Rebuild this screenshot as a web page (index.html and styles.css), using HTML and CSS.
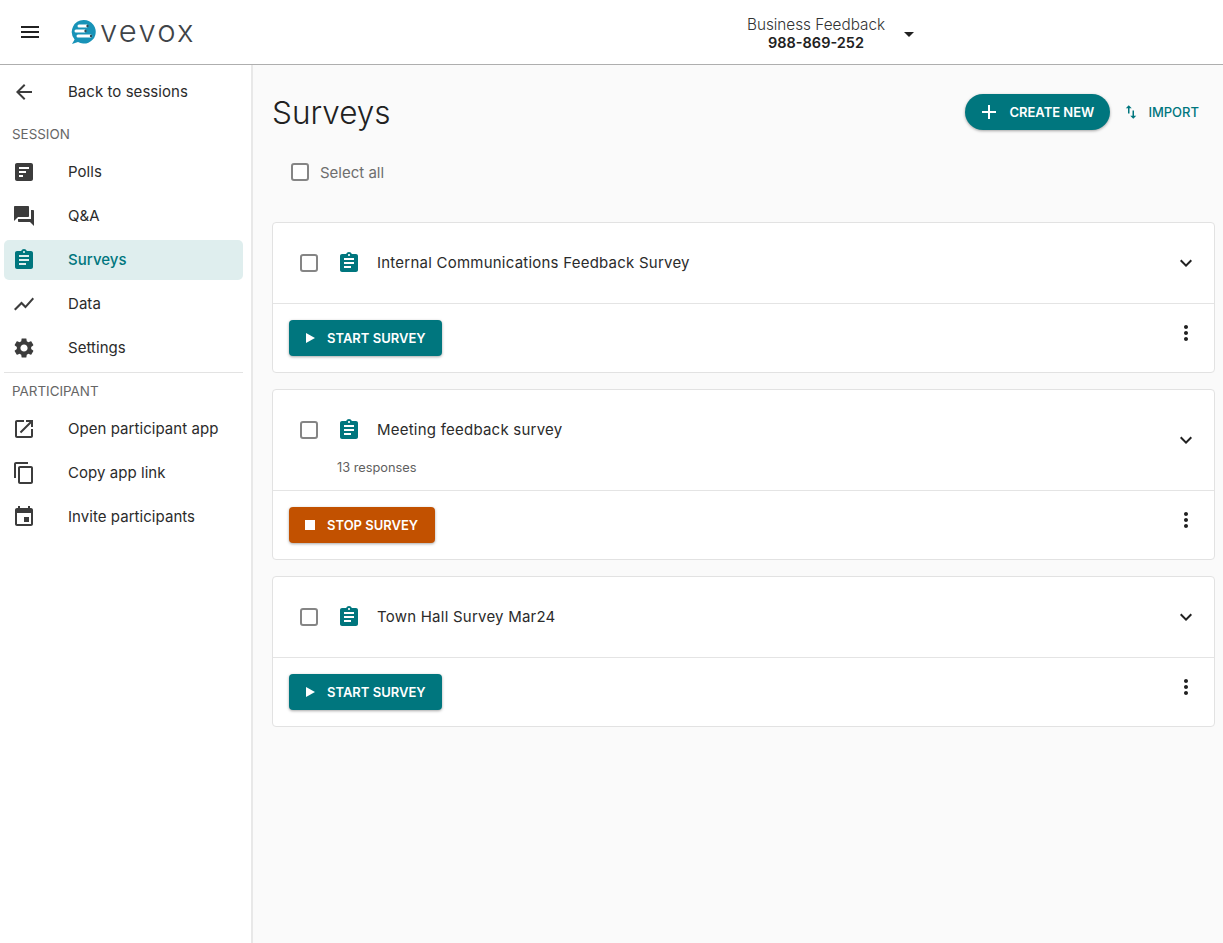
FILE: index.html
```html
<!DOCTYPE html>
<html lang="en">
<head>
<meta charset="utf-8">
<title>Surveys</title>
<link rel="stylesheet" href="styles.css">
</head>
<body>
<svg class="defs" width="0" height="0" aria-hidden="true">
  <symbol id="clip" viewBox="0 0 24 24"><path d="M19 3h-4.180C14.400 1.840 13.300 1 12 1s-2.400.84-2.820 2H5c-1.100 0-2 .9-2 2v14c0 1.100.9 2 2 2h14c1.100 0 2-.9 2-2V5c0-1.100-.9-2-2-2zm-7 0c.55 0 1 .45 1 1s-.45 1-1 1-1-.45-1-1 .45-1 1-1zm2 14H7v-2h7v2zm3-4H7v-2h10v2zm0-4H7V7h10v2z"/></symbol>
</svg>
<header class="topbar">
  <div class="brand">
    <svg class="menu-icon" viewBox="0 0 24 24"><path d="M3 18h18v-2H3v2zm0-5h18v-2H3v2zm0-7v2h18V6H3z"/></svg>
    <svg class="logo-mark" viewBox="0 0 26 26">
      <path fill="#1893b8" d="M13 1a11.800 11.800 0 1 1-6 22L1 25l2.600-4.600A11.800 11.800 0 0 1 13 1z"/>
      <path fill="#fff" d="M8 5.500h8l1.500 1.500L16 8.500H8a1.500 1.500 0 0 1 0-3zM5 10.500h9l1.500 1.500-1.500 1.500H5a1.500 1.500 0 0 1 0-3zM7 15.500h13l1.500 1.500-1.500 1.500H7a1.500 1.500 0 0 1 0-3z"/>
      <circle fill="#2b4a55" cx="16.500" cy="7" r="1.200"/><circle fill="#2b4a55" cx="14.500" cy="12" r="1.200"/><circle fill="#2b4a55" cx="20" cy="17" r="1.200"/>
    </svg>
    <span class="logo-word">vevox</span>
  </div>
  <div class="session-pick">
    <div class="session-text"><span class="session-name">Business Feedback</span><strong class="session-id">988-869-252</strong></div>
    <span class="caret"></span>
  </div>
</header>
<div class="layout">
  <nav class="sidebar">
    <a class="nav-item"><svg class="nav-icon" viewBox="0 0 24 24"><path d="M20 11H7.830l5.590-5.590L12 4l-8 8 8 8 1.410-1.410L7.830 13H20v-2z"/></svg><span>Back to sessions</span></a>
    <div class="nav-heading first">SESSION</div>
    <a class="nav-item"><svg class="nav-icon" viewBox="0 0 24 24"><path fill-rule="evenodd" d="M19 3H5c-1.100 0-2 .9-2 2v14c0 1.100.9 2 2 2h14c1.100 0 2-.9 2-2V5c0-1.100-.9-2-2-2zM7 7h10v2H7zm0 4h7v2H7zm0 4h4v2H7z"/></svg><span>Polls</span></a>
    <a class="nav-item"><svg class="nav-icon" viewBox="0 0 24 24"><path d="M21 6h-2v9H6v2c0 .55.45 1 1 1h11l4 4V7c0-.55-.45-1-1-1zm-4 6V3c0-.55-.45-1-1-1H3c-.55 0-1 .45-1 1v14l4-4h10c.55 0 1-.45 1-1z"/></svg><span>Q&amp;A</span></a>
    <a class="nav-item active"><svg class="nav-icon"><use href="#clip"/></svg><span>Surveys</span></a>
    <a class="nav-item"><svg class="nav-icon" viewBox="0 0 24 24"><path d="M3.500 18.490l6-6.010 4 4L22 6.920l-1.410-1.410-7.090 7.970-4-4L2 16.990z"/></svg><span>Data</span></a>
    <a class="nav-item"><svg class="nav-icon" viewBox="0 0 24 24"><path d="M19.140 12.940c.04-.3.060-.61.060-.94 0-.32-.02-.64-.07-.94l2.030-1.580c.18-.14.230-.41.120-.61l-1.920-3.320c-.12-.22-.37-.29-.59-.22l-2.390.96c-.5-.38-1.030-.7-1.620-.94l-.36-2.540c-.04-.24-.24-.41-.48-.41h-3.840c-.24 0-.43.170-.47.410l-.36 2.540c-.59.240-1.130.570-1.620.94l-2.390-.96c-.22-.08-.47 0-.59.220L2.740 8.870c-.12.210-.08.470.12.610l2.030 1.580c-.05.300-.09.630-.09.940s.02.640.07.940l-2.030 1.580c-.18.140-.23.410-.12.610l1.920 3.320c.12.220.37.290.59.220l2.390-.96c.5.380 1.030.7 1.620.94l.36 2.540c.05.240.24.410.48.410h3.840c.24 0 .44-.17.470-.41l.36-2.540c.59-.24 1.130-.56 1.620-.94l2.390.96c.22.080.47 0 .59-.22l1.920-3.320c.12-.22.070-.47-.12-.61l-2.010-1.580zM12 15.600c-1.980 0-3.600-1.620-3.600-3.600s1.620-3.600 3.600-3.600 3.600 1.620 3.600 3.600-1.620 3.600-3.600 3.600z"/></svg><span>Settings</span></a>
    <div class="nav-divider"></div>
    <div class="nav-heading">PARTICIPANT</div>
    <a class="nav-item"><svg class="nav-icon" viewBox="0 0 24 24"><path d="M19 19H5V5h7V3H5c-1.110 0-2 .9-2 2v14c0 1.100.89 2 2 2h14c1.100 0 2-.9 2-2v-7h-2v7zM14 3v2h3.590l-9.830 9.830 1.410 1.410L19 6.410V10h2V3h-7z"/></svg><span>Open participant app</span></a>
    <a class="nav-item"><svg class="nav-icon" viewBox="0 0 24 24"><path d="M16 1H4c-1.100 0-2 .9-2 2v14h2V3h12V1zm3 4H8c-1.100 0-2 .9-2 2v14c0 1.100.9 2 2 2h11c1.100 0 2-.9 2-2V7c0-1.100-.9-2-2-2zm0 16H8V7h11v14z"/></svg><span>Copy app link</span></a>
    <a class="nav-item"><svg class="nav-icon" viewBox="0 0 24 24"><path d="M19 3h-1V1h-2v2H8V1H6v2H5c-1.110 0-2 .9-2 2v14c0 1.100.89 2 2 2h14c1.100 0 2-.9 2-2V5c0-1.100-.9-2-2-2zm0 16H5V8h14v11zm-7-7h5v5h-5z"/></svg><span>Invite participants</span></a>
  </nav>
  <main class="content">
    <div class="title-row">
      <h1>Surveys</h1>
      <div class="title-actions">
        <button class="create-btn"><svg viewBox="0 0 24 24"><path d="M19 13h-6v6h-2v-6H5v-2h6V5h2v6h6v2z"/></svg>CREATE NEW</button>
        <button class="import-btn"><svg viewBox="0 0 24 24"><path d="M16 17.010V10h-2v7.010h-3L15 21l4-3.990h-3zM9 3L5 6.990h3V14h2V6.990h3L9 3z"/></svg>IMPORT</button>
      </div>
    </div>
    <label class="select-all"><span class="check"></span><span>Select all</span></label>
    <section class="card">
      <div class="card-head">
        <div class="card-title"><span class="check"></span><svg class="survey-icon"><use href="#clip"/></svg><span class="card-name">Internal Communications Feedback Survey</span></div>
        <svg class="chev" viewBox="0 0 24 24"><path d="M7.410 8.590L12 13.170l4.590-4.580L18 10l-6 6-6-6z"/></svg>
      </div>
      <div class="card-foot">
        <button class="action start"><span class="tri"></span>START SURVEY</button>
        <svg class="more" viewBox="0 0 24 24"><path d="M12 8c1.100 0 2-.9 2-2s-.9-2-2-2-2 .9-2 2 .9 2 2 2zm0 2c-1.100 0-2 .9-2 2s.9 2 2 2 2-.9 2-2-.9-2-2-2zm0 6c-1.100 0-2 .9-2 2s.9 2 2 2 2-.9 2-2-.9-2-2-2z"/></svg>
      </div>
    </section>
    <section class="card">
      <div class="card-head tall">
        <div class="card-main">
          <div class="card-title"><span class="check"></span><svg class="survey-icon"><use href="#clip"/></svg><span class="card-name">Meeting feedback survey</span></div>
          <div class="responses">13 responses</div>
        </div>
        <svg class="chev" viewBox="0 0 24 24"><path d="M7.410 8.590L12 13.170l4.590-4.580L18 10l-6 6-6-6z"/></svg>
      </div>
      <div class="card-foot">
        <button class="action stop"><span class="sq"></span>STOP SURVEY</button>
        <svg class="more" viewBox="0 0 24 24"><path d="M12 8c1.100 0 2-.9 2-2s-.9-2-2-2-2 .9-2 2 .9 2 2 2zm0 2c-1.100 0-2 .9-2 2s.9 2 2 2 2-.9 2-2-.9-2-2-2zm0 6c-1.100 0-2 .9-2 2s.9 2 2 2 2-.9 2-2-.9-2-2-2z"/></svg>
      </div>
    </section>
    <section class="card">
      <div class="card-head">
        <div class="card-title"><span class="check"></span><svg class="survey-icon"><use href="#clip"/></svg><span class="card-name">Town Hall Survey Mar24</span></div>
        <svg class="chev" viewBox="0 0 24 24"><path d="M7.410 8.590L12 13.170l4.590-4.580L18 10l-6 6-6-6z"/></svg>
      </div>
      <div class="card-foot">
        <button class="action start"><span class="tri"></span>START SURVEY</button>
        <svg class="more" viewBox="0 0 24 24"><path d="M12 8c1.100 0 2-.9 2-2s-.9-2-2-2-2 .9-2 2 .9 2 2 2zm0 2c-1.100 0-2 .9-2 2s.9 2 2 2 2-.9 2-2-.9-2-2-2zm0 6c-1.100 0-2 .9-2 2s.9 2 2 2 2-.9 2-2-.9-2-2-2z"/></svg>
      </div>
    </section>
  </main>
</div>
</body>
</html>
```
FILE: styles.css
```css
* { box-sizing: border-box; }
html, body { margin: 0; height: 100%; }
body {
  font-family: "Inter", "Liberation Sans", sans-serif;
  color: #212121;
  background: #fff;
  height: 943px;
  overflow: hidden;
  display: flex;
  flex-direction: column;
}
.defs { position: absolute; }
.topbar {
  height: 65px;
  flex: none;
  display: flex;
  align-items: center;
  border-bottom: 1px solid #aeaeae;
}
.brand { display: flex; align-items: center; padding-left: 18px; width: 747px; }
.menu-icon { width: 24px; height: 24px; fill: #212121; }
.logo-mark { width: 26px; height: 26px; margin-left: 29px; }
.logo-word {
  font-family: "Inter", sans-serif;
  font-weight: 300;
  font-size: 31px;
  letter-spacing: 2.2px;
  line-height: 30px;
  color: #3f4448;
  margin-left: 3px;
  margin-top: -2px;
}
.session-pick { display: flex; align-items: center; margin-top: 4px; }
.session-text { display: flex; flex-direction: column; align-items: center; line-height: 18px; width: 138px; }
.session-name { font-size: 15.300px; font-weight: 300; color: #333; white-space: nowrap; }
.session-id { font-size: 14.500px; font-weight: 600; color: #212121; white-space: nowrap; }
.caret { width: 0; height: 0; border: 5px solid transparent; border-top-color: #212121; border-bottom: 0; margin-left: 19px; }
.layout { flex: 1; display: flex; min-height: 0; }
.sidebar {
  width: 253px;
  flex: none;
  border-right: 2px solid #e8e8e8;
  padding: 7px 8px 0 4px;
  background: #fff;
}
.nav-item {
  display: flex;
  align-items: center;
  height: 40px;
  margin-bottom: 4px;
  border-radius: 5px;
  font-size: 15px;
  color: #2b2b2b;
  padding-left: 8px;
  letter-spacing: .05px;
}
.nav-item span { margin-left: 32px; padding-bottom: 1px; white-space: nowrap; }
.nav-icon { width: 24px; height: 24px; fill: #3c3c3c; flex: none; }
.nav-item.active { background: #dfeeee; color: #00767e; font-weight: 500; }
.nav-item.active .nav-icon { fill: #00767e; }
.nav-heading { font-size: 13.400px; color: #666; padding-left: 8px; height: 18px; line-height: 18px; margin-top: 9px; margin-bottom: 9px; }
.nav-heading.first { margin-top: 13px; }
.nav-divider { height: 1px; background: #e3e3e3; }
.content {
  flex: 1;
  background: #fafafa;
  padding: 29px 8px 0 19px;
}
.title-row { display: flex; justify-content: space-between; align-items: flex-start; height: 60px; }
h1 { margin: 0; font-size: 31.500px; font-weight: 300; line-height: 38px; color: #212121; }
.title-actions { display: flex; align-items: center; padding-right: 16px; }
.create-btn {
  display: flex; align-items: center;
  width: 145px; height: 36px;
  border: 0; border-radius: 18px;
  background: #00767e;
  color: #fff;
  font: 600 13px "Inter", sans-serif;
  padding: 0 0 0 12px;
  box-shadow: 0 1px 3px rgba(0,0,0,.35);
}
.create-btn svg { width: 24px; height: 24px; fill: #fff; margin-right: 8px; }
.import-btn {
  display: flex; align-items: center;
  border: 0; background: none;
  color: #00767e;
  font: 500 13px "Inter", sans-serif;
  margin-left: 12px;
  padding: 0;
  height: 36px;
}
.import-btn svg { width: 18px; height: 18px; fill: #00767e; margin-right: 8px; }
.select-all { display: flex; align-items: center; gap: 11px; padding-left: 19px; height: 18px; margin-top: 9px; margin-bottom: 41px; font-size: 15px; color: #6e6e6e; }
.check { display: block; width: 18px; height: 18px; border: 2px solid #858585; border-radius: 3px; flex: none; background: #fff; }
.card {
  background: #fff;
  border: 1px solid #e2e2e2;
  border-radius: 4px;
  margin-bottom: 16px;
}
.card-head {
  height: 81px;
  display: flex;
  align-items: center;
  justify-content: space-between;
  border-bottom: 1px solid #e4e4e4;
  padding: 0 16px 0 27px;
}
.card-head.tall { height: 101px; align-items: flex-start; }
.card-head.tall .chev { align-self: center; }
.card-main { padding-top: 28px; }
.card-title { display: flex; align-items: center; font-size: 15px; letter-spacing: .23px; color: #2b2b2b; }
.card-name { padding-bottom: 2px; }
.survey-icon { width: 24px; height: 24px; fill: #00767e; margin-left: 19px; margin-right: 16px; }
.responses { font-size: 12.800px; color: #5f5f5f; margin-left: 37px; margin-top: 18px; line-height: 15px; }
.chev { width: 24px; height: 24px; fill: #212121; margin-top: -1px; }
.card-foot {
  height: 68px;
  display: flex;
  align-items: flex-start;
  justify-content: space-between;
  padding: 16px 16px 0 16px;
}
.action {
  display: flex; align-items: center;
  height: 36px;
  border: 0; border-radius: 4px;
  color: #fff;
  font: 600 13px "Inter", sans-serif;
  padding: 0 0 0 17px;
  box-shadow: 0 1px 3px rgba(0,0,0,.35);
}
.start { width: 153px; background: #00767e; }
.stop { width: 146px; background: #c25100; padding-left: 16px; }
.tri { width: 0; height: 0; border-left: 9px solid #fff; border-top: 5px solid transparent; border-bottom: 5px solid transparent; margin-right: 12px; }
.sq { width: 10px; height: 10px; background: #fff; margin-right: 12px; }
.more { width: 24px; height: 24px; fill: #212121; margin-top: 1px; }
```
